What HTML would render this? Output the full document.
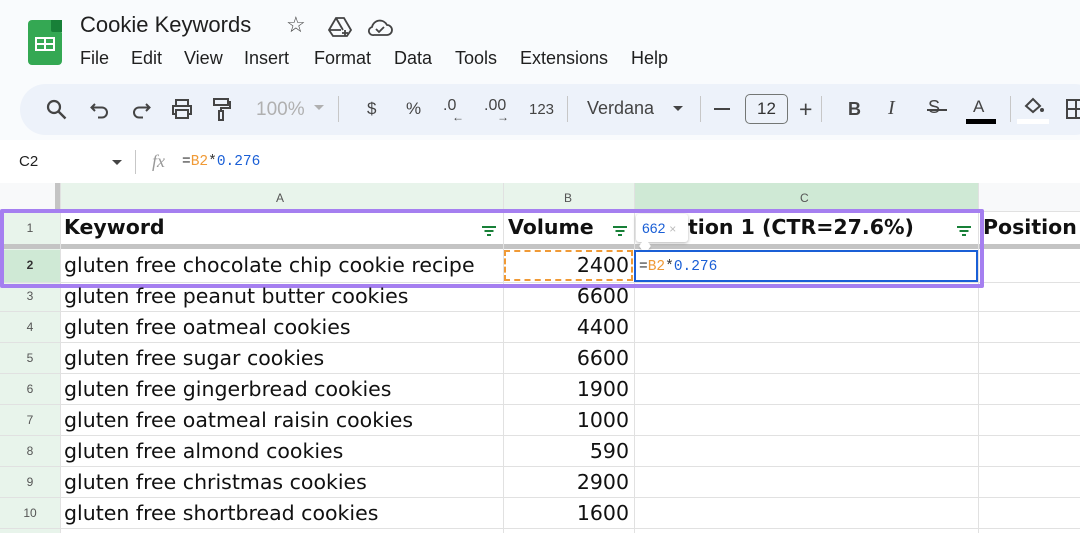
<!DOCTYPE html>
<html><head><meta charset="utf-8"><style>
*{margin:0;padding:0;box-sizing:border-box}
body{width:1080px;height:533px;overflow:hidden;background:#f9fbfd;font-family:"Liberation Sans",Arial,sans-serif;position:relative;color:#1f1f1f}
.a{position:absolute;white-space:nowrap}
.tb{position:absolute;left:20px;top:84px;width:1080px;height:51px;background:#edf2fa;border-radius:26px}
.sep{position:absolute;width:1px;height:26px;top:96px;background:#c7c7c7}
.cell{position:absolute;font-family:"DejaVu Sans",Verdana,sans-serif;font-size:20.5px;color:#111;white-space:nowrap}
.rn{position:absolute;left:0;width:60px;text-align:center;font-size:12px;color:#555;font-family:"Liberation Sans",Arial,sans-serif}
.hl{position:absolute;left:0;width:1080px;height:1px;background:#e1e1e1}
.vl{position:absolute;top:183px;width:1px;height:350px;background:#e1e1e1}
.flt{position:absolute;width:14px;height:9px}
.flt i{position:absolute;left:50%;height:1.6px;background:#188038;transform:translateX(-50%)}
</style></head><body>
<div class="a" style="left:28px;top:20px;width:34px;height:45px;background:#34a853;border-radius:4px;clip-path:polygon(0 0,68% 0,100% 28%,100% 100%,0 100%)"></div>
<div class="a" style="left:51px;top:20px;width:11px;height:12px;background:#188038;border-bottom-left-radius:2px"></div>
<div class="a" style="left:35px;top:37px;width:20px;height:14px;border:2px solid #fff;background:linear-gradient(#fff,#fff) 50% 0/2px 100% no-repeat,linear-gradient(#fff,#fff) 0 50%/100% 2px no-repeat"></div>
<div class="a" style="left:80px;top:12px;font-size:22px;color:#1f1f1f">Cookie Keywords</div>
<div class="a" style="left:286px;top:12px;font-size:22px;color:#444">☆</div>
<svg class="a" style="left:328px;top:16px" width="24" height="22" viewBox="0 0 24 22"><path d="M8 2h8l7 12-4 6H5l-4-6z M8 2l7 12 M1 14h12" fill="none" stroke="#444" stroke-width="1.8"/><path d="M17 14v6M14 17h6" stroke="#444" stroke-width="1.8"/></svg>
<svg class="a" style="left:367px;top:17px" width="26" height="20" viewBox="0 0 26 20"><path d="M7 18h13a5 5 0 0 0 0-10 8 8 0 0 0-15 2 4 4 0 0 0 2 8z" fill="none" stroke="#444" stroke-width="1.8"/><path d="M9 12l3 3 5-5" fill="none" stroke="#444" stroke-width="1.8"/></svg>
<div class="a" style="left:80px;top:48px;font-size:18px;color:#1f1f1f">
<span style="position:absolute;left:0">File</span><span style="position:absolute;left:51px">Edit</span><span style="position:absolute;left:104px">View</span><span style="position:absolute;left:164px">Insert</span><span style="position:absolute;left:234px">Format</span><span style="position:absolute;left:314px">Data</span><span style="position:absolute;left:375px">Tools</span><span style="position:absolute;left:440px">Extensions</span><span style="position:absolute;left:551px">Help</span></div>
<div class="tb"></div>
<svg class="a" style="left:46px;top:99px" width="22" height="22" viewBox="0 0 22 22"><circle cx="8" cy="8" r="6" fill="none" stroke="#444" stroke-width="2.2"/><path d="M12.5 12.5l7 7" stroke="#444" stroke-width="2.4"/></svg>
<svg class="a" style="left:90px;top:101px" width="20" height="18" viewBox="0 0 20 18"><path d="M5 3L1.5 6.5 5 10M2 6.5h10a5 5 0 0 1 0 10H8" fill="none" stroke="#444" stroke-width="2"/></svg>
<svg class="a" style="left:131px;top:101px" width="20" height="18" viewBox="0 0 20 18"><path d="M15 3l3.5 3.5L15 10M18 6.5H8a5 5 0 0 0 0 10h4" fill="none" stroke="#444" stroke-width="2"/></svg>
<svg class="a" style="left:171px;top:98px" width="22" height="22" viewBox="0 0 22 22"><path d="M5 7V2h12v5M5 16H2V8h18v8h-3M5 12h12v8H5z" fill="none" stroke="#444" stroke-width="2"/></svg>
<svg class="a" style="left:212px;top:97px" width="20" height="26" viewBox="0 0 20 26"><path d="M2 2h14v6H2zM16 5h2v6H9v3M7 14h4v9H7z" fill="none" stroke="#444" stroke-width="2"/></svg>
<div class="a" style="left:256px;top:99px;font-size:19px;color:#b0b0b0">100%</div>
<div class="a" style="left:314px;top:105px;border:5px solid transparent;border-top-color:#b0b0b0"></div>
<div class="sep" style="left:338px"></div>
<div class="a" style="left:367px;top:99px;font-size:17px;color:#444">$</div>
<div class="a" style="left:406px;top:99px;font-size:17px;color:#444">%</div>
<div class="a" style="left:443px;top:97px;font-size:16px;color:#444">.0<span style="position:absolute;left:9px;top:13px;font-size:12px">←</span></div>
<div class="a" style="left:484px;top:97px;font-size:16px;color:#444">.00<span style="position:absolute;left:13px;top:13px;font-size:12px">→</span></div>
<div class="a" style="left:529px;top:101px;font-size:15px;color:#444">123</div>
<div class="sep" style="left:567px"></div>
<div class="a" style="left:587px;top:98px;font-size:18px;color:#444">Verdana</div>
<div class="a" style="left:673px;top:106px;border:5px solid transparent;border-top-color:#444"></div>
<div class="sep" style="left:700px"></div>
<div class="a" style="left:714px;top:108px;width:16px;height:2px;background:#444"></div>
<div class="a" style="left:745px;top:94px;width:43px;height:30px;border:1.5px solid #747775;border-radius:5px;text-align:center;font-size:17px;line-height:27px;color:#333">12</div>
<div class="a" style="left:799px;top:96px;font-size:23px;color:#444">+</div>
<div class="sep" style="left:821px"></div>
<div class="a" style="left:848px;top:99px;font-size:18px;font-weight:bold;color:#444">B</div>
<div class="a" style="left:888px;top:97px;font-size:20px;font-style:italic;font-family:'Liberation Serif',serif;color:#444">I</div>
<div class="a" style="left:928px;top:97px;font-size:18px;color:#444">S</div><div class="a" style="left:927px;top:109px;width:20px;height:2px;background:#444"></div>
<div class="a" style="left:973px;top:97px;font-size:17px;color:#444">A</div><div class="a" style="left:966px;top:119px;width:30px;height:5px;background:#000"></div>
<div class="sep" style="left:1010px"></div>
<svg class="a" style="left:1022px;top:96px" width="24" height="20" viewBox="0 0 24 20"><path d="M4 10l7-7 7 7-7 6z" fill="none" stroke="#444" stroke-width="2"/><circle cx="20" cy="14" r="2" fill="#444"/></svg>
<div class="a" style="left:1017px;top:119px;width:32px;height:5px;background:#fff"></div>
<svg class="a" style="left:1066px;top:99px" width="20" height="20" viewBox="0 0 20 20"><path d="M1 1h18v18H1zM10 1v18M1 10h18" fill="none" stroke="#444" stroke-width="2"/></svg>
<div class="a" style="left:0;top:140px;width:1080px;height:43px;background:#fff"></div>
<div class="a" style="left:19px;top:153px;font-size:15px;color:#1f1f1f">C2</div>
<div class="a" style="left:112px;top:160px;border:5px solid transparent;border-top-color:#444"></div>
<div class="a" style="left:135px;top:150px;width:1px;height:24px;background:#c7c7c7"></div>
<div class="a" style="left:152px;top:151px;font-size:18px;font-style:italic;font-family:'Liberation Serif',serif;color:#999">fx</div>
<div class="a" style="left:182px;top:154px;font-family:'Liberation Mono',monospace;font-size:14.5px;color:#333">=<span style="color:#f09a36">B2</span>*<span style="color:#1a5fd6">0.276</span></div>
<div class="a" style="left:0;top:183px;width:1080px;height:350px;background:#fff"></div>
<div class="a" style="left:0;top:183px;width:56px;height:28px;background:#f8f9fa"></div>
<div class="a" style="left:60px;top:183px;width:443px;height:28px;background:#e8f4eb"></div>
<div class="a" style="left:503px;top:183px;width:131px;height:28px;background:#e8f4eb"></div>
<div class="a" style="left:634px;top:183px;width:344px;height:28px;background:#cfe9d5"></div>
<div class="a" style="left:978px;top:183px;width:102px;height:28px;background:#f8f9fa"></div>
<div class="a" style="left:634px;top:209px;width:344px;height:2px;background:#188038"></div>
<div class="a" style="left:276px;top:191px;font-size:12px;color:#555">A</div>
<div class="a" style="left:564px;top:191px;font-size:12px;color:#555">B</div>
<div class="a" style="left:800px;top:191px;font-size:12px;color:#555">C</div>
<div class="a" style="left:0;top:211px;width:60px;height:322px;background:#e8f4eb"></div>
<div class="a" style="left:0;top:250px;width:60px;height:32px;background:#cfe9d5"></div>
<div class="a" style="left:55px;top:183px;width:5px;height:28px;background:#c4c4c4"></div>
<div class="a" style="left:0;top:244px;width:1080px;height:5px;background:#c4c4c4"></div>
<div class="hl" style="top:211px"></div>
<div class="hl" style="top:282px"></div>
<div class="hl" style="top:311px"></div>
<div class="hl" style="top:342px"></div>
<div class="hl" style="top:373px"></div>
<div class="hl" style="top:404px"></div>
<div class="hl" style="top:435px"></div>
<div class="hl" style="top:466px"></div>
<div class="hl" style="top:497px"></div>
<div class="hl" style="top:528px"></div>
<div class="vl" style="left:60px"></div>
<div class="vl" style="left:503px"></div>
<div class="vl" style="left:634px"></div>
<div class="vl" style="left:978px"></div>
<div class="rn" style="top:221px">1</div>
<div class="rn" style="top:258px;font-weight:bold;color:#333">2</div>
<div class="rn" style="top:289px">3</div>
<div class="rn" style="top:320px">4</div>
<div class="rn" style="top:351px">5</div>
<div class="rn" style="top:382px">6</div>
<div class="rn" style="top:413px">7</div>
<div class="rn" style="top:444px">8</div>
<div class="rn" style="top:475px">9</div>
<div class="rn" style="top:506px">10</div>
<div class="cell" style="left:64px;top:215px;font-weight:bold">Keyword</div>
<div class="cell" style="left:508px;top:215px;font-weight:bold">Volume</div>
<div class="cell" style="left:688px;top:215px;font-weight:bold">tion 1 (CTR=27.6%)</div>
<div class="cell" style="left:983px;top:215px;font-weight:bold">Position</div>
<div class="flt" style="left:482px;top:226px"><i style="top:0;width:14px"></i><i style="top:4px;width:9px"></i><i style="top:8px;width:4px"></i></div>
<div class="flt" style="left:613px;top:226px"><i style="top:0;width:14px"></i><i style="top:4px;width:9px"></i><i style="top:8px;width:4px"></i></div>
<div class="flt" style="left:957px;top:226px"><i style="top:0;width:14px"></i><i style="top:4px;width:9px"></i><i style="top:8px;width:4px"></i></div>
<div class="a" style="left:636px;top:214px;width:52px;height:28px;background:#fff;box-shadow:0 1px 3px rgba(0,0,0,.3);border-radius:3px;font-size:14px;line-height:28px;padding-left:6px;color:#1a5fd6">662 <span style="color:#bbb;font-size:12px">×</span></div>
<div class="a" style="left:640px;top:241px;width:10px;height:10px;background:#fff;transform:rotate(45deg) skew(10deg,10deg);box-shadow:2px 2px 2px rgba(0,0,0,.15)"></div>
<div class="cell" style="left:64px;top:253px">gluten free chocolate chip cookie recipe</div>
<div class="a" style="left:504px;top:250px;width:129px;height:31px;border:2px dashed #f09a36"></div>
<div class="cell" style="right:451px;top:253px">2400</div>
<div class="a" style="left:634px;top:250px;width:344px;height:32px;border:2px solid #1a5fd6;background:#fff"></div>
<div class="a" style="left:639px;top:259px;font-family:'Liberation Mono',monospace;font-size:14.5px;color:#333">=<span style="color:#f09a36">B2</span>*<span style="color:#1a5fd6">0.276</span></div>
<div class="a" style="left:0;top:209px;width:984px;height:79px;border:4px solid #a57ff0;border-radius:2px"></div>
<div class="cell" style="left:64px;top:284px">gluten free peanut butter cookies</div><div class="cell" style="right:451px;top:284px">6600</div>
<div class="cell" style="left:64px;top:315px">gluten free oatmeal cookies</div><div class="cell" style="right:451px;top:315px">4400</div>
<div class="cell" style="left:64px;top:346px">gluten free sugar cookies</div><div class="cell" style="right:451px;top:346px">6600</div>
<div class="cell" style="left:64px;top:377px">gluten free gingerbread cookies</div><div class="cell" style="right:451px;top:377px">1900</div>
<div class="cell" style="left:64px;top:408px">gluten free oatmeal raisin cookies</div><div class="cell" style="right:451px;top:408px">1000</div>
<div class="cell" style="left:64px;top:439px">gluten free almond cookies</div><div class="cell" style="right:451px;top:439px">590</div>
<div class="cell" style="left:64px;top:470px">gluten free christmas cookies</div><div class="cell" style="right:451px;top:470px">2900</div>
<div class="cell" style="left:64px;top:501px">gluten free shortbread cookies</div><div class="cell" style="right:451px;top:501px">1600</div>
</body></html>
